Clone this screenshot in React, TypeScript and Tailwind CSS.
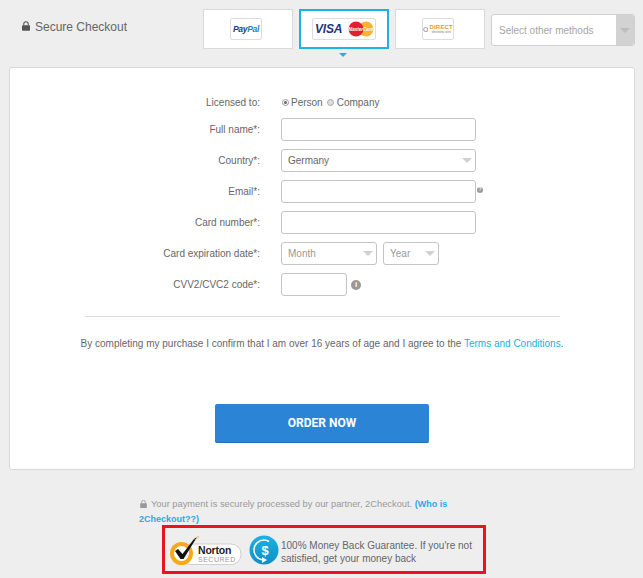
import React from "react";

const font = "font-['Liberation_Sans',Arial,sans-serif]";

function Lock({ className }: { className: string }) {
  return (
    <svg viewBox="0 0 10 12" className={className} fill="currentColor">
      <path d="M1 5h8a1 1 0 0 1 1 1v5a1 1 0 0 1-1 1H1a1 1 0 0 1-1-1V6a1 1 0 0 1 1-1z" />
      <path d="M2.2 5.5V3.4a2.8 2.8 0 0 1 5.6 0v2.1" fill="none" stroke="currentColor" strokeWidth="1.3" />
    </svg>
  );
}

function Arrow({ className }: { className: string }) {
  return <span className={`h-0 w-0 border-x-[5px] border-t-[5px] border-x-transparent ${className}`} />;
}

function Row({ label, children, className = "mb-2" }: { label: string; children: React.ReactNode; className?: string }) {
  return (
    <div className={`flex items-center ${className}`}>
      <div className="w-[250px] shrink-0 text-right text-[10px] text-[#666]">{label}</div>
      <div className="ml-[21px] flex items-center">{children}</div>
    </div>
  );
}

function Field({ className = "w-[195px]" }: { className?: string }) {
  return <div className={`h-[23px] rounded-[3px] border border-[#c4c4c4] bg-white ${className}`} />;
}

function Select({ value, className, muted }: { value: string; className: string; muted?: boolean }) {
  return (
    <div className={`flex h-[23px] items-center justify-between rounded-[3px] border border-[#c4c4c4] bg-white pl-[6px] pr-[2px] text-[10px] ${muted ? "text-[#999]" : "text-[#666]"} ${className}`}>
      <span>{value}</span>
      <Arrow className="mr-[1px] border-t-[#d0d0d0]" />
    </div>
  );
}

function Tab({ active, children }: { active?: boolean; children: React.ReactNode }) {
  return (
    <div className={`flex h-10 w-[90px] items-center justify-center bg-white ${active ? "border-2 border-[#1fb0e8]" : "border border-[#d9d9d9]"}`}>
      {children}
    </div>
  );
}

function PaypalLogo() {
  return (
    <div className="mr-[4px] flex h-[22px] w-[32px] items-center justify-center rounded-[2px] border border-[#ddd] bg-white font-['Liberation_Sans',sans-serif] text-[8.5px] font-bold italic tracking-[-0.3px]">
      <span className="text-[#1b3c7e]">Pay</span>
      <span className="text-[#2a7fc1]">Pal</span>
    </div>
  );
}

function CardsLogo() {
  return (
    <div className="flex h-[22px] w-[64px] items-center rounded-[2px] border border-[#ddd] bg-white pl-[2px]">
      <span className="w-[33px] font-['Liberation_Sans',sans-serif] text-[12px] font-bold italic tracking-[-0.2px] text-[#27337a]">VISA</span>
      <svg width="26" height="16" viewBox="0 0 26 16">
        <circle cx="18" cy="8" r="7.5" fill="#f9b233" />
        <circle cx="8" cy="8" r="7.5" fill="#e2212f" />
        <text x="13" y="9.6" textAnchor="middle" fontSize="4.5" fontWeight="700" fontStyle="italic" fontFamily="Liberation Sans" fill="#fff">MasterCard</text>
      </svg>
    </div>
  );
}

function DirectLogo() {
  return (
    <div className="mr-[4px] flex h-[22px] w-[32px] items-center justify-center gap-[1px] rounded-[2px] border border-[#ddd] bg-white">
      <svg width="7" height="7" viewBox="0 0 7 7">
        <circle cx="3.5" cy="3.5" r="2.6" fill="none" stroke="#aaa" strokeWidth="1.4" />
      </svg>
      <div className="flex flex-col items-center">
        <span className="font-['Liberation_Sans',sans-serif] text-[6px] font-bold leading-[7px] tracking-[0.2px] text-[#f0962e]">DIRECT</span>
        <span className="font-['Liberation_Sans',sans-serif] text-[3px] leading-[3px] text-[#777]">electronic wire</span>
      </div>
    </div>
  );
}

function NortonBadge() {
  return (
    <svg width="72" height="32" viewBox="0 0 72 32" className="shrink-0">
      <rect x="11" y="10" width="60" height="20.5" rx="10" fill="#fff" stroke="#cfcfcf" />
      <circle cx="11.5" cy="19.5" r="11.5" fill="#f7a81b" />
      <circle cx="11.5" cy="19.5" r="7.5" fill="#fff" />
      <path d="M5 17l3-2 4.5 5L24 5l3-2-13.5 22h-3z" fill="#111" />
      <path d="M25 6l4-4" stroke="#d9a441" strokeWidth="1.5" strokeDasharray="1 1" />
      <text x="28" y="19.5" fontSize="10.5" fontWeight="700" letterSpacing="-0.2" fontFamily="Liberation Sans" fill="#222">Norton</text>
      <text x="28" y="27.5" fontSize="7" letterSpacing="0.5" fontFamily="Liberation Sans" fill="#999">SECURED</text>
    </svg>
  );
}

function MoneyBadge() {
  return (
    <svg width="30" height="30" viewBox="0 0 30 30" className="shrink-0">
      <defs>
        <linearGradient id="coin" x1="0" y1="0" x2="0" y2="1">
          <stop offset="0" stopColor="#1db2e4" />
          <stop offset="1" stopColor="#0d8fc6" />
        </linearGradient>
      </defs>
      <circle cx="15" cy="15" r="14.5" fill="url(#coin)" />
      <path d="M20 6.5A9.8 9.8 0 0 0 15 5 10 10 0 0 0 13 24.8" fill="none" stroke="#fff" strokeWidth="1.5" />
      <path d="M13 22l5 3-5 3z" fill="#fff" />
      <text x="16" y="19.5" textAnchor="middle" fontSize="13" fontWeight="700" fontFamily="Liberation Sans" fill="#fff">$</text>
    </svg>
  );
}

export default function App() {
  return (
    <div className={`${font} h-[578px] w-[643px] overflow-hidden bg-[#eeeeee]`}>
      {/* Top bar */}
      <div className="flex h-[67px] items-start pl-[22px] pt-[9px]">
        <div className="flex w-[181px] items-center gap-[5px] pt-[9px] text-[12px] text-[#666]">
          <Lock className="mb-[2px] h-[10px] w-[8px] text-[#555]" />
          <span>Secure Checkout</span>
        </div>
        <div className="flex gap-[6px]">
          <Tab>
            <PaypalLogo />
          </Tab>
          <div className="relative">
            <Tab active>
              <CardsLogo />
            </Tab>
            <span className="absolute left-[40px] top-[44px] h-0 w-0 border-x-[4px] border-t-[4px] border-x-transparent border-t-[#1fb0e8]" />
          </div>
          <Tab>
            <DirectLogo />
          </Tab>
          <div className="mt-[5px] flex h-[32px] w-[144px] items-center justify-between overflow-hidden rounded-[3px] border border-[#cfcfcf] bg-white pl-[7px] text-[10px] text-[#a5a5a5]">
            <span>Select other methods</span>
            <div className="flex h-full w-[18px] items-center justify-center bg-[#d2d2d2]">
              <Arrow className="border-t-[#bbb]" />
            </div>
          </div>
        </div>
      </div>

      {/* Form card */}
      <div className="mx-[9px] h-[403px] w-[626px] rounded-[3px] border border-[#d8d8d8] bg-white pt-[28px]">
        <Row label="Licensed to:" className="mb-[9px] h-[13px]">
          <div className="flex items-center text-[10px] text-[#666]">
            <span className="mb-[1px] ml-[1px] flex h-[7px] w-[7px] items-center justify-center rounded-full border border-[#999] bg-white">
              <span className="h-[3px] w-[3px] rounded-full bg-[#666]" />
            </span>
            <span className="ml-[2px]">Person</span>
            <span className="mb-[1px] ml-[4px] h-[7px] w-[7px] rounded-full border border-[#aaa] bg-[#ddd]" />
            <span className="ml-[3px]">Company</span>
          </div>
        </Row>
        <Row label="Full name*:">
          <Field />
        </Row>
        <Row label="Country*:">
          <Select value="Germany" className="w-[195px]" />
        </Row>
        <Row label="Email*:">
          <Field />
          <span className="mb-[4px] ml-[1px] flex h-[6px] w-[6px] items-center justify-center rounded-full bg-[#999] text-[5px] font-bold text-white">?</span>
        </Row>
        <Row label="Card number*:">
          <Field />
        </Row>
        <Row label="Card expiration date*:">
          <Select value="Month" muted className="w-[96px]" />
          <Select value="Year" muted className="ml-[6px] w-[56px]" />
        </Row>
        <Row label="CVV2/CVC2 code*:" className="mb-0">
          <Field className="w-[66px]" />
          <span className="ml-[4px] flex h-[10px] w-[10px] items-center justify-center rounded-full bg-[#999] text-[8px] font-bold text-white">i</span>
        </Row>

        <hr className="ml-[75px] mt-[20px] w-[475px] border-t border-[#d8d8d8]" />

        <p className="mt-[20px] text-center text-[10px] leading-[13px] text-[#666]">
          By completing my purchase I confirm that I am over 16 years of age and I agree to the{" "}
          <span className="text-[#13b0e6]">Terms and Conditions</span>.
        </p>

        <button className="ml-[205px] mt-[54px] flex h-[39px] w-[214px] items-center justify-center rounded-[2px] border-b border-[#2470b8] bg-[#2b84d6] font-['Roboto',sans-serif] text-[12px] font-bold text-white">
          ORDER NOW
        </button>
      </div>

      {/* Footer */}
      <div className="pl-[139px] pt-[27px]">
        <p className="text-[9.3px] leading-[15px] text-[#999]">
          <Lock className="mb-[2px] ml-[1px] mr-[4px] inline h-[8px] w-[7px] text-[#999]" />
          Your payment is securely processed by our partner, 2Checkout.{" "}
          <span className="text-[9px] font-bold text-[#29abe2]">(Who is</span>
        </p>
        <p className="text-[9px] font-bold leading-[15px] text-[#29abe2]">2Checkout??)</p>
      </div>
      <div className="ml-[162px] mt-[-2px] flex h-[49px] w-[324px] items-center border-[3px] border-[#e8141f] pl-[5px] pr-[6px]">
        <NortonBadge />
        <div className="ml-[7px]">
          <MoneyBadge />
        </div>
        <p className="ml-[2px] mt-[4px] text-[10px] leading-[13px] text-[#666]">
          100% Money Back Guarantee. If you're not satisfied, get your money back
        </p>
      </div>
    </div>
  );
}
